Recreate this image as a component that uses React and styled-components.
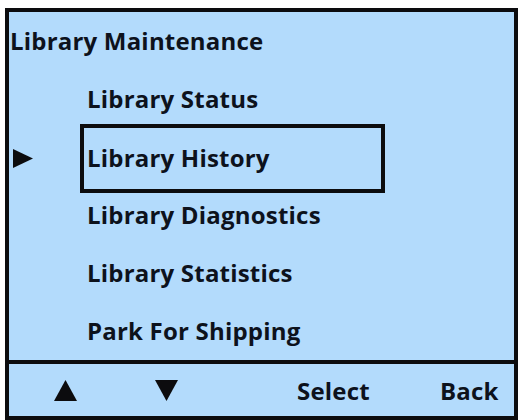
import React from "react";
import styled, { createGlobalStyle } from "styled-components";

const Global = createGlobalStyle`
  html, body { margin: 0; padding: 0; background: #ffffff; }
  * { box-sizing: border-box; }
`;

const Frame = styled.div`
  margin: 8px 0 0 5px;
  width: 513px;
  height: 412px;
  border: 4px solid #0c0c0e;
  background: #b3dbfc;
  display: flex;
  flex-direction: column;
  font-family: "Open Sans", Lato, sans-serif;
  font-weight: 700;
  font-size: 24px;
  letter-spacing: 0.2px;
  color: #0d121c;
  overflow: hidden;
`;

const Menu = styled.div`
  display: grid;
  grid-template-rows: repeat(6, 58px);
  align-items: center;
`;

const Title = styled.div`
  line-height: 58px;
  padding-left: 1px;
  white-space: nowrap;
`;

const Row = styled.div`
  display: grid;
  grid-template-columns: 78px auto;
  align-items: center;
  height: 58px;
`;

const Pointer = styled.svg`
  width: 22px;
  height: 21px;
  margin-left: 3px;
  margin-top: -4px;
  display: block;
`;

const Label = styled.div`
  white-space: nowrap;
  ${(p) =>
    p.$selected
      ? `
    align-self: start;
    width: 305px;
    height: 69px;
    margin-left: -7px;
    margin-top: -4px;
    padding-left: 3px;
    border: 4px solid #0c0c0e;
    line-height: 59px;
  `
      : `
    line-height: 58px;
  `}
`;

const SoftBar = styled.div`
  flex: 1;
  border-top: 4px solid #0c0c0e;
  display: flex;
  align-items: center;
`;

const KeyIcon = styled.svg`
  display: block;
  width: 25px;
  height: 23px;
  margin-left: ${(p) => p.$offset}px;
`;

const KeyText = styled.div`
  margin-left: ${(p) => p.$offset}px;
  white-space: nowrap;
`;

const items = [
  "Library Status",
  "Library History",
  "Library Diagnostics",
  "Library Statistics",
  "Park For Shipping",
];

export default function App() {
  const selected = 1;
  return (
    <>
      <Global />
      <Frame>
        <Menu>
          <Title>Library Maintenance</Title>
          {items.map((t, i) => (
            <Row key={t}>
              <div>
                {i === selected && (
                  <Pointer viewBox="0 0 22 21">
                    <polygon points="1,1 21,10.5 1,20" fill="#0c0c0e" />
                  </Pointer>
                )}
              </div>
              <Label $selected={i === selected}>{t}</Label>
            </Row>
          ))}
        </Menu>
        <SoftBar>
          <KeyIcon $offset={44} viewBox="0 0 25 23">
            <polygon points="12.5,1 24,22 1,22" fill="#0c0c0e" />
          </KeyIcon>
          <KeyIcon $offset={76} viewBox="0 0 25 23">
            <polygon points="1,1 24,1 12.5,22" fill="#0c0c0e" />
          </KeyIcon>
          <KeyText $offset={118}>Select</KeyText>
          <KeyText $offset={70}>Back</KeyText>
        </SoftBar>
      </Frame>
    </>
  );
}
